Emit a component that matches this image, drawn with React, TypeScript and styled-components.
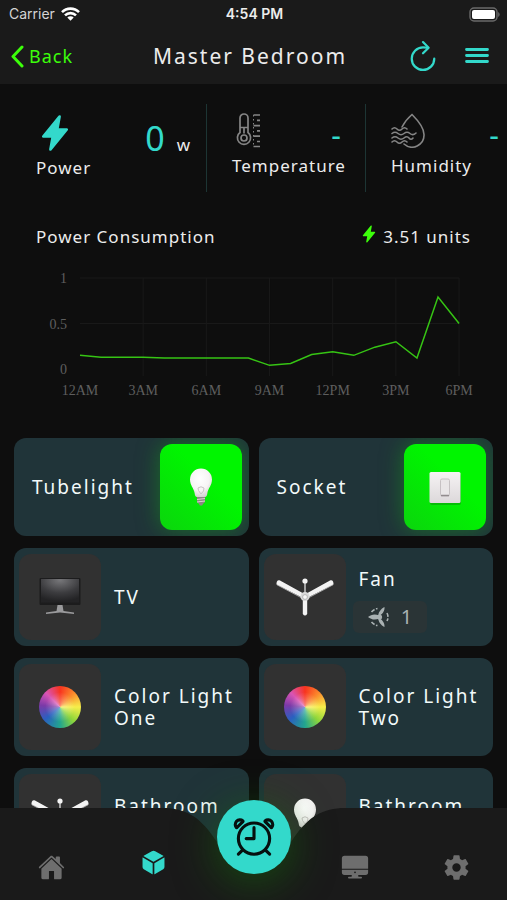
import React from "react";
import styled, { createGlobalStyle, css } from "styled-components";
import {
  IoAlarmOutline,
  IoCube,
  IoDesktop,
  IoFlash,
  IoHome,
  IoRefreshOutline,
  IoSettingsSharp,
} from "react-icons/io5";

const teal = "#33d9cb";
const green = "#3cff0a";
const bar = "#1a1a1a";

const GlobalStyle = createGlobalStyle`
  * { box-sizing: border-box; }
  body { margin: 0; background: #0e0e0e; color: #ececec; font-family: "Noto Sans", "Open Sans", sans-serif; }
  button { border: 0; padding: 0; background: none; color: inherit; font: inherit; cursor: pointer; }
  h1, h2, p { margin: 0; font-weight: 400; }
  svg { display: block; flex: none; }
`;

const Screen = styled.div`
  height: 100vh;
  display: flex;
  flex-direction: column;
  overflow: hidden;
`;

const StatusBar = styled.div`
  display: grid;
  grid-template-columns: 1fr auto 1fr;
  align-items: center;
  height: 28px;
  padding: 0 7px 0 9px;
  background: ${bar};
  font: 14px/20px Inter, sans-serif;
`;

const Carrier = styled.span`
  display: flex;
  align-items: center;
  gap: 6px;
  color: #d4d4d4;
`;

const Clock = styled.span`
  font-weight: 600;
`;

const BatterySlot = styled.span`
  justify-self: end;
`;

const Header = styled.header`
  display: grid;
  grid-template-columns: 1fr auto 1fr;
  align-items: center;
  height: 56px;
  padding: 0 18px 0 11px;
  background: ${bar};
`;

const BackButton = styled.button`
  display: flex;
  align-items: center;
  gap: 5px;
  color: ${green};
  font-size: 18px;
  line-height: 24px;
  letter-spacing: 1px;
`;

const Title = styled.h1`
  font-size: 21px;
  line-height: 28px;
  letter-spacing: 2px;
`;

const HeaderActions = styled.div`
  display: flex;
  justify-content: flex-end;
  gap: 24px;
  color: ${teal};
`;

const Content = styled.main`
  flex: 1;
  min-height: 0;
  overflow-y: auto;
  scrollbar-width: none;
  padding-bottom: 104px;
`;

const Stats = styled.section`
  display: grid;
  grid-template-columns: 206fr 159fr 142fr;
  padding-top: 20px;
`;

const Stat = styled.div<{ $first?: boolean }>`
  display: flex;
  flex-direction: column;
  min-width: 0;
  height: 88px;
  padding: ${(p) => (p.$first ? "10px 16px 0 36px" : "8px 8px 0 25px")};
  border-left: ${(p) => (p.$first ? "0" : "1px solid #1d3534")};
`;

const StatTop = styled.div`
  display: flex;
  justify-content: space-between;
  height: 44px;
`;

const StatLabel = styled.h2`
  font-size: 17px;
  line-height: 20px;
  letter-spacing: 1px;
`;

const Reading = styled.p`
  display: flex;
  align-items: baseline;
  gap: 12px;
  color: ${teal};
  font-size: 34px;
  line-height: 48px;
`;

const Unit = styled.span`
  color: #ececec;
  font-size: 17px;
  line-height: 24px;
`;

const NoReading = styled.p<{ $inset?: boolean }>`
  margin-top: 3px;
  padding-right: ${(p) => (p.$inset ? "16px" : "0")};
  color: ${teal};
  font-size: 30px;
  line-height: 40px;
`;

const UsageHead = styled.div`
  display: flex;
  justify-content: space-between;
  padding: 33px 36px 0;
  font-size: 17px;
  line-height: 24px;
  letter-spacing: 1px;
`;

const UsageTitle = styled.h2`
  font-size: 17px;
`;

const Units = styled.p`
  display: flex;
  gap: 5px;
`;

const BoltSlot = styled.span`
  color: ${green};
`;

const Chart = styled.svg`
  width: 100%;
  height: auto;
  margin: 11px 0 33px;
`;

const Devices = styled.section`
  display: grid;
  grid-template-columns: 1fr 1fr;
  gap: 12px 10px;
  padding: 0 14px;
`;

const Card = styled.article<{ $on?: boolean }>`
  display: flex;
  flex-direction: ${(p) => (p.$on ? "row-reverse" : "row")};
  justify-content: ${(p) => (p.$on ? "space-between" : "flex-start")};
  align-items: center;
  gap: 13px;
  height: 98px;
  padding: ${(p) => (p.$on ? "0 7px 0 18px" : "0 4px 0 5px")};
  border-radius: 12px;
  background: #203439;
  overflow: hidden;
`;

const Tile = styled.button<{ $on?: boolean }>`
  display: flex;
  flex: none;
  align-items: center;
  justify-content: center;
  width: 82px;
  height: 86px;
  border-radius: 12px;
  background: #313131;
  ${(p) =>
    p.$on &&
    css`
      background: linear-gradient(45deg, #0bd50d, #00f500 60%);
      box-shadow: 0 0 22px rgba(20, 150, 30, 0.6);
    `}
`;

const DeviceText = styled.div<{ $control?: boolean }>`
  display: flex;
  flex-direction: column;
  gap: 11px;
  min-width: 0;
  padding-top: ${(p) => (p.$control ? "6px" : "0")};
`;

const DeviceName = styled.h2`
  color: #f2fafa;
  font-size: 19px;
  line-height: 22px;
  letter-spacing: 2px;
`;

const Speed = styled.p`
  display: flex;
  align-items: center;
  justify-content: center;
  gap: 12px;
  width: 74px;
  height: 32px;
  margin-left: -6px;
  border-radius: 6px;
  background: #2a3436;
  color: #a9b1b2;
  font-size: 20px;
`;

const Wheel = styled.span`
  width: 42px;
  height: 42px;
  border-radius: 50%;
  background: radial-gradient(circle, rgba(255, 255, 255, 0.4), rgba(255, 255, 255, 0) 50%),
    conic-gradient(#f8331f, #fb8a2c 45deg, #f6ee4a 90deg, #8fd63a 135deg, #22a58e 180deg, #2a60c0 230deg, #7b3aa8 275deg, #d954b4 315deg, #f8331f);
`;

const NavBar = styled.nav`
  position: fixed;
  inset: auto 0 0;
  display: flex;
  height: 92px;
`;

const NavSide = styled.div`
  display: flex;
  flex: 1;
  align-items: center;
  justify-content: space-between;
  padding: 26px 0 0 38px;
  background: ${bar};
  z-index: 1;

  &:last-child {
    padding: 26px 37px 0 0;
  }
`;

const NavLink = styled.a<{ $active?: boolean }>`
  display: block;
  color: ${(p) => (p.$active ? teal : "#6e6e6e")};
  ${(p) => p.$active && "padding-bottom: 10px;"}
`;

const NavCentre = styled.div`
  position: relative;
  width: 174px;
  display: flex;
  justify-content: center;
`;

const NavCurve = styled.svg`
  position: absolute;
  inset: 0;
`;

const AlarmButton = styled.button`
  position: absolute;
  top: -8px;
  display: flex;
  align-items: center;
  justify-content: center;
  width: 74px;
  height: 74px;
  border-radius: 50%;
  background: ${teal};
  color: #06100f;
  box-shadow: 0 8px 44px rgba(20, 110, 10, 0.6);
`;

const Wifi = () => (
  <svg width="19" height="14" viewBox="0 0 19 14" fill="none" stroke="#fff" strokeWidth="2.6">
    <path d="M1 5.2a12 12 0 0 1 17 0M4 8.4a7.8 7.8 0 0 1 11 0" />
    <path d="M9.5 13.8 6.3 10.6a4.6 4.6 0 0 1 6.4 0z" fill="#fff" stroke="none" />
  </svg>
);

const Battery = () => (
  <svg width="31" height="15" viewBox="0 0 31 15">
    <rect x="1" y="1" width="27" height="13" rx="4" fill="#1a1a1a" stroke="#6a6a6a" strokeWidth="1.4" />
    <rect x="3" y="3" width="23" height="9" rx="2" fill="#fff" />
    <path d="M29.2 5v5q1.4-.8 1.4-2.5T29.2 5z" fill="#6a6a6a" />
  </svg>
);

const Chevron = () => (
  <svg width="13" height="23" viewBox="0 0 13 23" fill="none" stroke="currentColor" strokeWidth="3" strokeLinecap="round" strokeLinejoin="round">
    <path d="M11 2 2 11.5 11 21" />
  </svg>
);

const MenuLines = () => (
  <svg width="24" height="36" viewBox="0 0 24 36" stroke="currentColor" strokeWidth="2.8" strokeLinecap="round">
    <path d="M1.500 11.500h21M1.500 17.500h21M1.500 23.500h21" />
  </svg>
);

const Thermometer = () => (
  <svg width="34" height="36" viewBox="0 0 34 36" fill="none" stroke="#858585" strokeWidth="1.7">
    <path d="M8 20.500V6a4 4 0 0 1 8 0v14.500a6.600 6.600 0 1 1-8 0zM8.500 15.500h7M12 15.500v6" />
    <circle cx="12" cy="26" r="3" />
    <path d="M21.500 3h6.500M25 8.300h3M21.500 13.600h6.500M25 18.900h3M21.500 24.200h6.500M25 29.500h3M21.500 34.500h6.500" />
    <path d="M21.500 3v32" strokeDasharray="1.500 2.500" strokeWidth="1" />
  </svg>
);

const Droplet = () => (
  <svg width="34" height="36" viewBox="0 0 34 36" fill="none" stroke="#858585" strokeWidth="1.6" strokeLinecap="round">
    <path d="M11 15C13.500 10 17 6 21 2.500c6 6 12 13 12 20A12 12 0 0 1 13 32" />
    <path d="M1 17q2.500-2.500 5 0t5 0 5 0M1 21.500q3-2.500 6 0t6 0 6 0 6-.5M1 26q3-2.500 6 0t6 0 5 0 4 0M1 30q2.500-2.500 5 0t5 0 5 0" />
  </svg>
);

const Bulb = () => (
  <svg width="24" height="40" viewBox="0 0 24 40">
    <defs>
      <radialGradient id="bulbGlass" cx="45%" cy="35%" r="70%">
        <stop offset="0" stopColor="#fff" />
        <stop offset="0.6" stopColor="#f6f4f4" />
        <stop offset="1" stopColor="#cfcaca" />
      </radialGradient>
    </defs>
    <path d="M12 1.500a11 11 0 0 1 11 11c0 6-3.800 8.500-4.600 13.500-.3 2.500-1 4-2.400 4H8c-1.400 0-2.100-1.500-2.400-4C4.800 21 1 18.500 1 12.500a11 11 0 0 1 11-11z" fill="url(#bulbGlass)" />
    <path d="M9.500 23.500 9 21q3-2.500 6 0l-.5 3-2.500 3z" fill="none" stroke="#c9c4c4" />
    <path d="M8 30h8v5l-2 2-.8 1.500h-2.400L10 37l-2-2z" fill="#8d8585" />
    <path d="M8 32.500l8-1M8 35l8-1" stroke="#d8d2d2" strokeWidth="1" />
  </svg>
);

const Switch = () => (
  <svg width="36" height="38" viewBox="0 0 36 38">
    <defs>
      <linearGradient id="plate" x2="0" y2="1">
        <stop stopColor="#f6f3f4" />
        <stop offset="1" stopColor="#dcd8da" />
      </linearGradient>
    </defs>
    <rect x="3" y="6" width="31" height="31" rx="2" fill="#087a08" opacity="0.4" />
    <rect x="2.500" y="4" width="31" height="31" rx="1.500" fill="url(#plate)" />
    <rect x="13.500" y="11" width="9" height="17" rx="1.500" fill="#e9e6e7" stroke="#c6c1c3" />
    <path d="M14 27.500h8" stroke="#928c8e" strokeWidth="1.500" />
  </svg>
);

const Television = () => (
  <svg width="42" height="40" viewBox="0 0 42 40">
    <defs>
      <radialGradient id="screen" cx="50%" cy="5%" r="90%">
        <stop stopColor="#77777a" />
        <stop offset="0.6" stopColor="#3c3c3f" />
        <stop offset="1" stopColor="#232325" />
      </radialGradient>
    </defs>
    <rect x="0.500" y="1" width="41" height="27" rx="1" fill="#1c1c1d" />
    <rect x="2" y="2" width="38" height="23.500" fill="url(#screen)" />
    <path d="M18.500 28h5l1 6 10.500 1.500v1.500l-14-1.500L7 37v-1.500L17.500 34z" fill="#9a9a9c" />
  </svg>
);

const CeilingFan = () => (
  <svg width="58" height="40" viewBox="0 0 58 40">
    <path d="M29 4v14" stroke="#c9c9c9" strokeWidth="1.500" />
    <circle cx="29" cy="4" r="2.600" fill="#f4f4f4" />
    <path d="M27.500 16.500 4 3.500C1.500 2.500.2 5 .5 7.500L26 20.500zM30.500 16.500 54 3.500c2.500-1 3.800 1.500 3.500 4L32 20.500zM26.800 21h4.400v16q-2.200 3-4.400 0z" fill="#f3f3f3" />
    <path d="M1 7.800 25.500 20.800M57 7.800 32.500 20.800" stroke="#bdbdbd" strokeWidth="0.800" />
    <circle cx="29" cy="19.500" r="4.600" fill="#d9d9d9" />
    <circle cx="29" cy="20" r="2.400" fill="#f6f6f6" stroke="#a8a8a8" strokeWidth="0.800" />
  </svg>
);

const Rotor = () => (
  <svg width="22" height="20" viewBox="0 0 22 20" fill="#a9b1b2">
    <path d="M12 8.500C8 6.500 4 7.500 1 10c3 2.500 7 3.500 11 1.500z" />
    <path d="M11.500 9C15 8 18 4 17.500 0 13.500 2 11 6 11.500 9zM11.500 11c-.5 3 2 7 6 9 .5-4-2.500-8-6-9z" />
    <circle cx="12.500" cy="10" r="2.600" />
    <path d="M4.500 5Q7 2 10.500 1.500M4.500 15q2.500 3 6 3.500M20 6q2 4 0 8" fill="none" stroke="#a9b1b2" strokeWidth="1.600" strokeDasharray="4 1.500" />
  </svg>
);

const chartLeft = 80;
const hourWidth = 21.06;
const readings = [0.15, 0.13, 0.13, 0.13, 0.12, 0.12, 0.12, 0.12, 0.12, 0.04, 0.06, 0.16, 0.19, 0.15, 0.24, 0.3, 0.12, 0.79, 0.5];
const hours = ["12AM", "3AM", "6AM", "9AM", "12PM", "3PM", "6PM"];
const levelY = (value: number) => 109 - value * 91;

const PowerChart = () => (
  <Chart viewBox="0 0 507 145" role="img" aria-label="Power consumption by hour">
    <g stroke="#191919" strokeWidth="1">
      {[0.5, 1].map((v) => (
        <line key={v} x1={chartLeft} x2="459" y1={levelY(v)} y2={levelY(v)} />
      ))}
      {hours.slice(1).map((h, i) => (
        <line key={h} x1={chartLeft + (i + 1) * 3 * hourWidth} x2={chartLeft + (i + 1) * 3 * hourWidth} y1="18" y2="116" />
      ))}
    </g>
    <g fill="#5e5e5e" fontFamily="'Liberation Serif', serif" fontSize="14">
      {[1, 0.5, 0].map((v) => (
        <text key={v} x="67" y={levelY(v) + 5} textAnchor="end">{v}</text>
      ))}
      {hours.map((h, i) => (
        <text key={h} x={chartLeft + i * 3 * hourWidth} y="135" textAnchor="middle">{h}</text>
      ))}
    </g>
    <polyline
      points={readings.map((v, i) => `${chartLeft + i * hourWidth},${levelY(v)}`).join(" ")}
      fill="none"
      stroke="#36c414"
      strokeWidth="1.500"
    />
  </Chart>
);

type Device = { name: string; icon: React.ReactNode; on?: boolean; speed?: number };

const devices: Device[] = [
  { name: "Tubelight", icon: <Bulb />, on: true },
  { name: "Socket", icon: <Switch />, on: true },
  { name: "TV", icon: <Television /> },
  { name: "Fan", icon: <CeilingFan />, speed: 1 },
  { name: "Color Light One", icon: <Wheel /> },
  { name: "Color Light Two", icon: <Wheel /> },
  { name: "Bathroom Fan", icon: <CeilingFan /> },
  { name: "Bathroom Light", icon: <Bulb /> },
];

export default function App() {
  return (
    <Screen>
      <GlobalStyle />
      <StatusBar>
        <Carrier>Carrier <Wifi /></Carrier>
        <Clock>4:54 PM</Clock>
        <BatterySlot><Battery /></BatterySlot>
      </StatusBar>
      <Header>
        <BackButton type="button"><Chevron />Back</BackButton>
        <Title>Master Bedroom</Title>
        <HeaderActions>
          <button type="button" aria-label="Refresh"><IoRefreshOutline size={36} /></button>
          <button type="button" aria-label="Menu"><MenuLines /></button>
        </HeaderActions>
      </Header>
      <Content>
        <Stats>
          <Stat $first>
            <StatTop>
              <IoFlash size={38} color={teal} />
              <Reading>0 <Unit>w</Unit></Reading>
            </StatTop>
            <StatLabel>Power</StatLabel>
          </Stat>
          <Stat>
            <StatTop>
              <Thermometer />
              <NoReading $inset>-</NoReading>
            </StatTop>
            <StatLabel>Temperature</StatLabel>
          </Stat>
          <Stat>
            <StatTop>
              <Droplet />
              <NoReading>-</NoReading>
            </StatTop>
            <StatLabel>Humidity</StatLabel>
          </Stat>
        </Stats>
        <UsageHead>
          <UsageTitle>Power Consumption</UsageTitle>
          <Units><BoltSlot><IoFlash size={18} /></BoltSlot>3.51 units</Units>
        </UsageHead>
        <PowerChart />
        <Devices>
          {devices.map((d) => (
            <Card key={d.name} $on={d.on}>
              <Tile type="button" $on={d.on} aria-pressed={!!d.on} aria-label={d.name}>{d.icon}</Tile>
              <DeviceText $control={!!d.speed}>
                <DeviceName>{d.name}</DeviceName>
                {d.speed && <Speed><Rotor />{d.speed}</Speed>}
              </DeviceText>
            </Card>
          ))}
        </Devices>
      </Content>
      <NavBar>
        <NavSide>
          <NavLink href="#home" aria-label="Home"><IoHome size={27} /></NavLink>
          <NavLink href="#rooms" aria-label="Rooms" $active><IoCube size={27} /></NavLink>
        </NavSide>
        <NavCentre>
          <NavCurve viewBox="0 0 174 92" width="174" height="92">
            <path d="M0 0C22 2 34 10 50 34Q66 62 87 62T124 34C140 10 152 2 174 0V92H0z" fill={bar} />
          </NavCurve>
          <AlarmButton type="button" aria-label="Alarms"><IoAlarmOutline size={50} /></AlarmButton>
        </NavCentre>
        <NavSide>
          <NavLink href="#displays" aria-label="Displays"><IoDesktop size={28} /></NavLink>
          <NavLink href="#settings" aria-label="Settings"><IoSettingsSharp size={27} /></NavLink>
        </NavSide>
      </NavBar>
    </Screen>
  );
}
